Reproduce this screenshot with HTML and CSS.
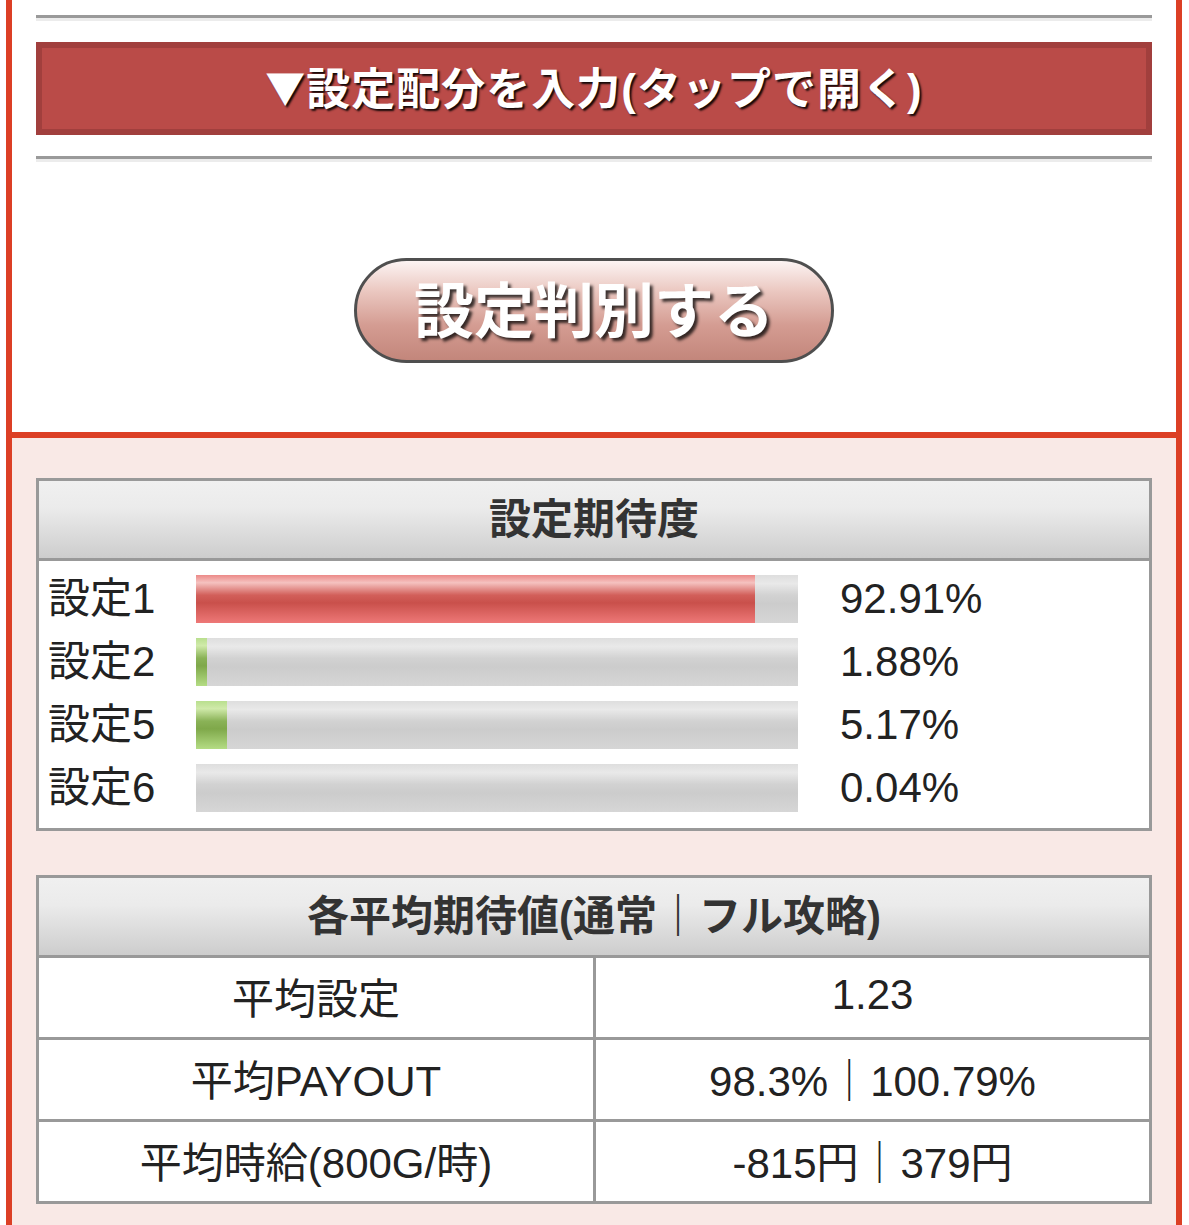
FILE: index.html
```html
<!DOCTYPE html>
<html lang="ja">
<head>
    <meta charset="UTF-8">
    <meta name="viewport" content="width=device-width, initial-scale=1.0">
    <title>設定判別</title>
    <link rel="stylesheet" href="styles.css">
</head>
<body>
    <div class="page">
        <section class="input-area">
            <hr class="rule">
            <div class="toggle-bar"><span class="arrow">▼</span>設定配分を入力(タップで開く)</div>
            <hr class="rule">
            <div class="judge-wrap">
                <button type="button" class="judge-btn">設定判別する</button>
            </div>
        </section>

        <section class="result-area">
            <div class="panel">
                <div class="panel-head">設定期待度</div>
                <div class="rates">
                    <div class="rate-row">
                        <span class="rate-label">設定1</span>
                        <div class="bar"><div class="fill fill-red" style="width: 92.91%"></div></div>
                        <span class="rate-value">92.91%</span>
                    </div>
                    <div class="rate-row">
                        <span class="rate-label">設定2</span>
                        <div class="bar"><div class="fill fill-green" style="width: 1.88%"></div></div>
                        <span class="rate-value">1.88%</span>
                    </div>
                    <div class="rate-row">
                        <span class="rate-label">設定5</span>
                        <div class="bar"><div class="fill fill-green" style="width: 5.17%"></div></div>
                        <span class="rate-value">5.17%</span>
                    </div>
                    <div class="rate-row">
                        <span class="rate-label">設定6</span>
                        <div class="bar"><div class="fill fill-green" style="width: 0.04%"></div></div>
                        <span class="rate-value">0.04%</span>
                    </div>
                </div>
            </div>

            <div class="panel">
                <div class="panel-head">各平均期待値(通常｜フル攻略)</div>
                <div class="stat-row">
                    <div class="stat-name">平均設定</div>
                    <div class="stat-value">1.23</div>
                </div>
                <div class="stat-row">
                    <div class="stat-name">平均PAYOUT</div>
                    <div class="stat-value">98.3%｜100.79%</div>
                </div>
                <div class="stat-row">
                    <div class="stat-name">平均時給(800G/時)</div>
                    <div class="stat-value">-815円｜379円</div>
                </div>
            </div>
        </section>
    </div>
</body>
</html>
```

FILE: styles.css
```css
:root {
    --frame-red: #dc3f25;
    --panel-border: #999999;
    --pink-bg: #f9e9e6;
    --text-color: #222222;
}

body {
    margin: 0;
    font-family: "Liberation Sans", "Noto Sans CJK JP", sans-serif;
    background-color: white;
    color: var(--text-color);
}

.page {
    margin: 0 7px 0 6px;
    border-left: 6px solid var(--frame-red);
    border-right: 6px solid var(--frame-red);
}

/* upper input area */
.input-area {
    padding: 15px 24px 69px;
}

.rule {
    height: 0;
    margin: 0;
    border: 0;
    border-top: 3px solid #9a9a9a;
    border-bottom: 3px solid #ececec;
}

.toggle-bar {
    box-sizing: border-box;
    height: 93px;
    margin: 21px 0;
    padding-bottom: 5px;
    border: 6px solid #a13f3d;
    background-color: #ba4b48;
    color: white;
    font-size: 44px;
    font-weight: bold;
    letter-spacing: 1px;
    display: flex;
    align-items: center;
    justify-content: center;
    text-shadow: 2px 2px 2px rgba(0, 0, 0, 0.9);
}

.arrow {
    font-family: "Noto Sans CJK JP", sans-serif;
    font-size: 40px;
}

.judge-wrap {
    display: flex;
    justify-content: center;
    padding-top: 96px;
}

.judge-btn {
    width: 480px;
    height: 105px;
    padding: 0 0 9px;
    border: 3px solid #4f4f4f;
    border-radius: 53px;
    background: linear-gradient(#fcf4f3 0%, #ebc8c1 30%, #d49c92 65%, #c3867b 100%);
    color: white;
    font-family: "Noto Sans CJK JP", sans-serif;
    font-size: 60px;
    font-weight: bold;
    text-shadow: 3px 3px 3px rgba(0, 0, 0, 0.75);
    cursor: pointer;
}

/* results */
.result-area {
    border-top: 6px solid var(--frame-red);
    background-color: var(--pink-bg);
    padding: 40px 24px 23px;
}

.panel {
    border: 3px solid var(--panel-border);
    background-color: white;
}

.panel + .panel {
    margin-top: 44px;
}

.panel-head {
    box-sizing: border-box;
    height: 80px;
    padding-bottom: 8px;
    border-bottom: 3px solid var(--panel-border);
    background: linear-gradient(#f0f0f0 0%, #ebebeb 35%, #cdcdcd 100%);
    color: #333333;
    font-size: 42px;
    font-weight: bold;
    display: flex;
    align-items: center;
    justify-content: center;
}

.rates {
    padding: 14px 0 16px;
    display: flex;
    flex-direction: column;
    gap: 15px;
}

.rate-row {
    display: grid;
    grid-template-columns: 157px 602px 1fr;
    align-items: center;
    height: 48px;
    font-size: 42px;
    line-height: 48px;
}

.rate-label {
    padding-left: 9px;
}

.rate-value {
    padding-left: 42px;
}

.bar {
    height: 48px;
    background: linear-gradient(#dedede 0%, #e9e9e9 18%, #d2d2d2 42%, #cccccc 60%, #d6d6d6 100%);
}

.fill {
    height: 100%;
}

.fill-red {
    background: linear-gradient(#ec8a88 0%, #f5c2c0 16%, #d25f5a 42%, #c9504b 58%, #ee7877 100%);
}

.fill-green {
    background: linear-gradient(#b9df8e 0%, #d0eaaa 16%, #8ab257 42%, #7fa84a 58%, #b4dc84 100%);
}

.stat-row {
    display: grid;
    grid-template-columns: 554px 1fr;
    height: 79px;
}

.stat-row + .stat-row {
    border-top: 3px solid var(--panel-border);
}

.stat-name,
.stat-value {
    display: flex;
    align-items: center;
    justify-content: center;
    padding-bottom: 5px;
    font-size: 42px;
}

.stat-value {
    border-left: 3px solid var(--panel-border);
}
```
